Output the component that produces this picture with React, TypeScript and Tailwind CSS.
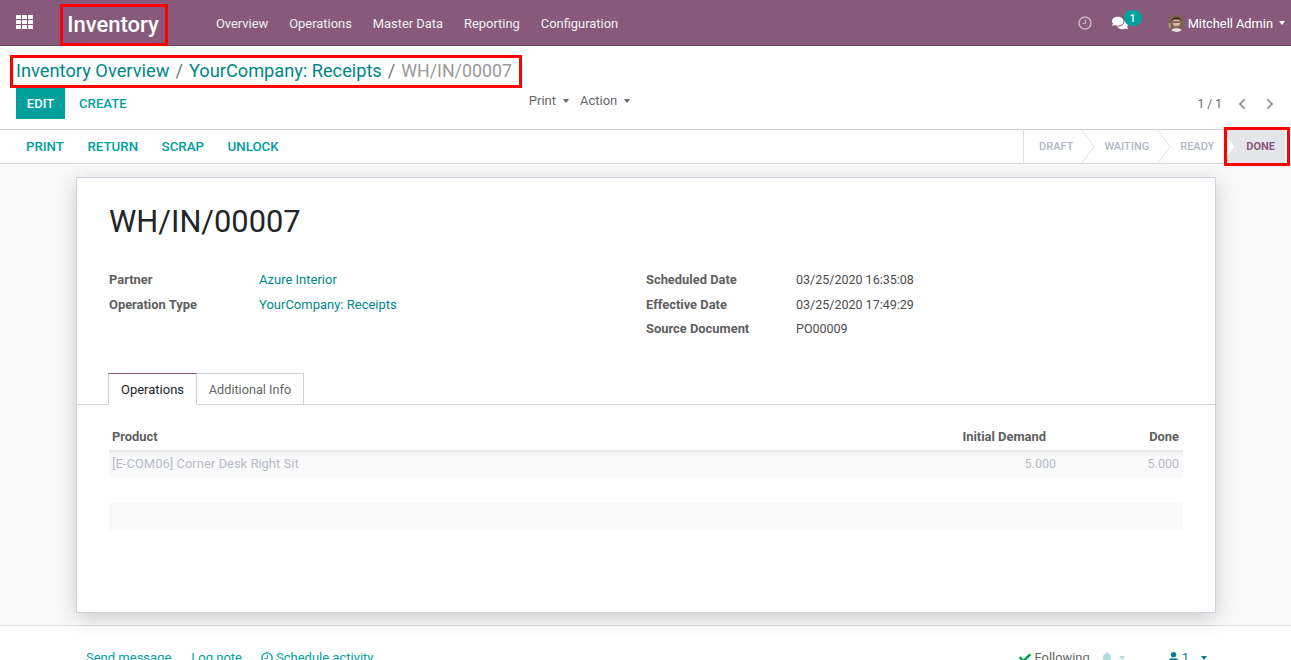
import { FaBell, FaCheck, FaChevronLeft, FaChevronRight, FaComments, FaUser } from 'react-icons/fa';

const MENU = ['Overview', 'Operations', 'Master Data', 'Reporting', 'Configuration'];
const ACTIONS = ['Print', 'Return', 'Scrap', 'Unlock'];

function Caret({ className = 'border-t-[#666666]' }: { className?: string }) {
  return <span className={`inline-block w-0 h-0 border-x-[3.5px] border-x-transparent border-t-[4px] ${className}`} />;
}

function AppsIcon() {
  return (
    <svg width="18" height="15" viewBox="0 0 18 15" fill="#ffffff">
      {[0, 5, 10].map((y) =>
        [0, 6, 12].map((x) => <rect key={`${x}-${y}`} x={x} y={y} width="5" height="4" rx="0.5" />),
      )}
    </svg>
  );
}

function ClockOutline({ size, color }: { size: number; color: string }) {
  return (
    <svg width={size} height={size} viewBox="0 0 14 14" fill="none" stroke={color} strokeWidth="1.5">
      <circle cx="7" cy="7" r="6" />
      <path d="M7.5 3.5 V7.5 H4.5" strokeWidth="1.1" />
    </svg>
  );
}

function Avatar() {
  return (
    <svg width="17" height="17" viewBox="0 0 17 17" className="rounded-full">
      <rect width="17" height="17" fill="#7d6254" />
      <circle cx="8.5" cy="7.5" r="3.8" fill="#d9b49a" />
      <path d="M3.5 6 C4 1 13 1 13.5 6 L12 4.5 L5 4.5 Z" fill="#3b2a22" />
      <path d="M2 17 C3 12 14 12 15 17 Z" fill="#e8e4e0" />
      <rect x="5" y="6.5" width="7" height="1" fill="#33241e" />
      <rect x="0" y="8" width="3" height="5" fill="#a58a78" />
    </svg>
  );
}

function StatusStep({ label, first, active, last }: { label: string; first?: boolean; active?: boolean; last?: boolean }) {
  return (
    <div
      className={`relative h-full flex items-center pt-[1px] text-[11px] uppercase ${
        active ? 'bg-[#e4e6ea] text-[#875a7b] font-bold pl-[22px] pr-[10px]' : 'text-[#b3b8c4] font-medium pr-[10px]'
      } ${!active && first ? 'pl-[15px]' : ''} ${!active && !first ? 'pl-[21px]' : ''}`}
    >
      {label}
      {!last && (
        <svg width="13" height="33" viewBox="0 0 13 33" className="absolute top-0 -right-[12px] z-10">
          <path d="M0 0 L12 16.5 L0 33" fill="#ffffff" stroke="#dcdfe4" />
        </svg>
      )}
    </div>
  );
}

function Field({ label, value, link, digits }: { label: string; value: string; link?: boolean; digits?: boolean }) {
  return (
    <div className="flex items-center h-[25px] nth-3:h-[24px] text-[13px]">
      <div className="w-[150px] font-bold text-[#5f5f5f] text-[12.9px]">{label}</div>
      <div className={`${link ? 'text-[#00888a]' : 'text-[#4c4c4c]'} ${digits ? 'text-[12.5px] pt-[1px]' : ''}`}>{value}</div>
    </div>
  );
}

export default function App() {
  return (
    <div className="h-[660px] overflow-hidden flex flex-col bg-white font-['Roboto',sans-serif] text-[13px] text-[#4c4c4c]">
      {/* Navbar */}
      <nav className="h-[46px] shrink-0 flex items-center bg-[#875a7b] border-b border-[#6f4a66] text-white">
        <div className="w-[60px] pl-4 flex items-center">
          <AppsIcon />
        </div>
        <div className="w-[108px] h-[42px] mt-[5px] border-[3px] border-[#ff0000] flex items-center justify-center pb-[2px] pr-[2px] text-[22px] font-medium">
          Inventory
        </div>
        <div className="flex gap-[21px] ml-[48px] pt-[2px] text-[12.9px] text-white/90">
          {MENU.map((m) => (
            <span key={m}>{m}</span>
          ))}
        </div>
        <div className="ml-auto flex items-center pr-[6px] pt-[1px]">
          <ClockOutline size={14} color="rgba(255,255,255,0.55)" />
          <div className="relative ml-[20px] w-[16px]">
            <FaComments size={16} />
            <span className="absolute -top-[5px] left-[12px] w-[18px] h-[16px] rounded-full bg-[#00a09d] text-[10px] font-medium flex items-center justify-center">
              1
            </span>
          </div>
          <div className="ml-[40px]">
            <Avatar />
          </div>
          <span className="ml-[3px] pt-[1px] text-[12.8px]">Mitchell Admin</span>
          <Caret className="border-t-white ml-[6px]" />
        </div>
      </nav>

      {/* Control panel */}
      <div className="h-[84px] shrink-0 border-b border-[#d0d0d0] relative pt-[9px]">
        <div className="ml-[10px] w-[512px] h-[33px] border-[3px] border-[#ff0000] flex items-center pl-[3px] pb-[1px] text-[18.3px] whitespace-nowrap">
          <span className="text-[#008784]">Inventory Overview</span>
          <span className="mx-[6px] text-[#777777]">/</span>
          <span className="text-[#008784] text-[18.2px]">YourCompany: Receipts</span>
          <span className="mx-[6px] text-[#777777]">/</span>
          <span className="text-[#999999] text-[17.8px]">WH/IN/00007</span>
        </div>
        <div className="flex items-start pl-4">
          <button className="w-[49px] h-[31px] bg-[#00a09d] text-white text-[13px] font-medium">EDIT</button>
          <button className="ml-[14px] h-[31px] text-[#00a09d] text-[13.2px] font-medium">CREATE</button>
          <div className="ml-[402px] mt-[3px] flex items-center text-[#666666]">
            <span>Print</span>
            <Caret className="border-t-[#666666] ml-[7px]" />
            <span className="ml-[11px]">Action</span>
            <Caret className="border-t-[#666666] ml-[7px]" />
          </div>
          <div className="ml-auto mt-[7px] pr-[15px] flex items-center text-[#666666]">
            <span className="text-[12px] translate-x-[1px]">1 / 1</span>
            <FaChevronLeft className="ml-[15px] text-[#8f9aa8]" size={12} />
            <FaChevronRight className="ml-[16px] text-[#8f9aa8]" size={12} />
          </div>
        </div>
      </div>

      {/* Status bar */}
      <div className="h-[34px] shrink-0 flex items-center border-b border-[#d9d9d9] pl-[26px]">
        <div className="flex gap-[23.5px] pt-[1px] text-[#00a09d] text-[13.3px] font-medium uppercase">
          {ACTIONS.map((a) => (
            <span key={a}>{a}</span>
          ))}
        </div>
        <div className="ml-auto h-full flex border-l border-[#dcdfe4] mr-[6px] relative">
          <StatusStep label="Draft" first />
          <StatusStep label="Waiting" />
          <StatusStep label="Ready" />
          <StatusStep label="Done" active last />
          <div className="absolute -top-[3px] -right-[5px] w-[66px] h-[39px] border-[3px] border-[#ff0000] z-20" />
        </div>
      </div>

      {/* Sheet */}
      <div className="h-[462px] shrink-0 bg-[#f9f9f9] border-b border-[#dcdfe4] pt-[13px]">
        <div className="ml-[76px] w-[1140px] h-[436px] bg-white border border-[#cdd2dd] shadow-[0_5px_20px_-1px_rgba(0,0,0,0.2)] pt-[26px]">
          <h1 className="ml-[32px] text-[30.8px] leading-[36px] text-[#212529]">WH/IN/00007</h1>
          <div className="ml-[32px] mt-[27px] grid grid-cols-2 gap-x-[37px] w-[1037px] h-[107.4px]">
            <div>
              <Field label="Partner" value="Azure Interior" link />
              <Field label="Operation Type" value="YourCompany: Receipts" link />
            </div>
            <div>
              <Field label="Scheduled Date" value="03/25/2020 16:35:08" digits />
              <Field label="Effective Date" value="03/25/2020 17:49:29" digits />
              <Field label="Source Document" value="PO00009" digits />
            </div>
          </div>

          <div className="mt-[-1px] h-[32px] border-b border-[#cdd2dd] pl-[31px] flex">
            <div className="w-[89px] h-[32px] pt-[1px] bg-white border border-[#cdd2dd] border-t-[#875a7b] border-b-white flex items-center justify-center text-[#212529]">
              Operations
            </div>
            <div className="w-[107px] h-[32px] pt-[1px] border border-l-0 border-[#cdd2dd] flex items-center justify-center text-[12.7px] text-[#666666]">
              Additional Info
            </div>
          </div>

          <div className="mx-[32px] mt-[19px] w-[1074px]">
            <div className="h-[26px] pb-[2px] flex items-center pl-[3px] font-bold text-[12.9px] text-[#5f5f5f]">
              <div className="flex-1">Product</div>
              <div className="w-[300px] pr-[4px] text-right">Initial Demand</div>
              <div className="w-[133px] pr-[4px] text-right">Done</div>
            </div>
            <div className="h-[27px] flex items-center pl-[3px] bg-[#fafafa] shadow-[inset_0_6px_6px_-6px_rgba(0,0,0,0.15)] text-[#b6bcc6]">
              <div className="flex-1">[E-COM06] Corner Desk Right Sit</div>
              <div className="w-[300px] text-right text-[12.5px] translate-x-[-4px]">5.000</div>
              <div className="w-[123px] pr-[4px] text-right text-[12.5px]">5.000</div>
            </div>
            <div className="h-[26px]" />
            <div className="h-[27px] bg-[#fafafa]" />
          </div>
        </div>
      </div>

      {/* Chatter */}
      <div className="relative flex items-start h-[40px] pt-[24px] pl-[86px] leading-[15px]">
        <span className="text-[#00a09d]">Send message</span>
        <span className="ml-[20px] text-[#00a09d]">Log note</span>
        <span className="ml-[19px] text-[#00a09d] flex items-center gap-[3px]">
          <ClockOutline size={12} color="#00a09d" />
          Schedule activity
        </span>
        <div className="ml-auto pr-[84px] flex items-center text-[#666666]">
          <FaCheck className="text-[#00a04a] mr-[4px]" size={12} />
          <span className="text-[12.9px]">Following</span>
          <FaBell className="ml-[11px] text-[#b2dcdb]" size={12} />
          <Caret className="border-t-[#b2dcdb] ml-[6px]" />
          <FaUser className="ml-[43px] text-[#00828a]" size={11} />
          <span className="ml-[3px] text-[#00828a]">1</span>
          <Caret className="border-t-[#00828a] ml-[12px]" />
        </div>
      </div>
    </div>
  );
}
